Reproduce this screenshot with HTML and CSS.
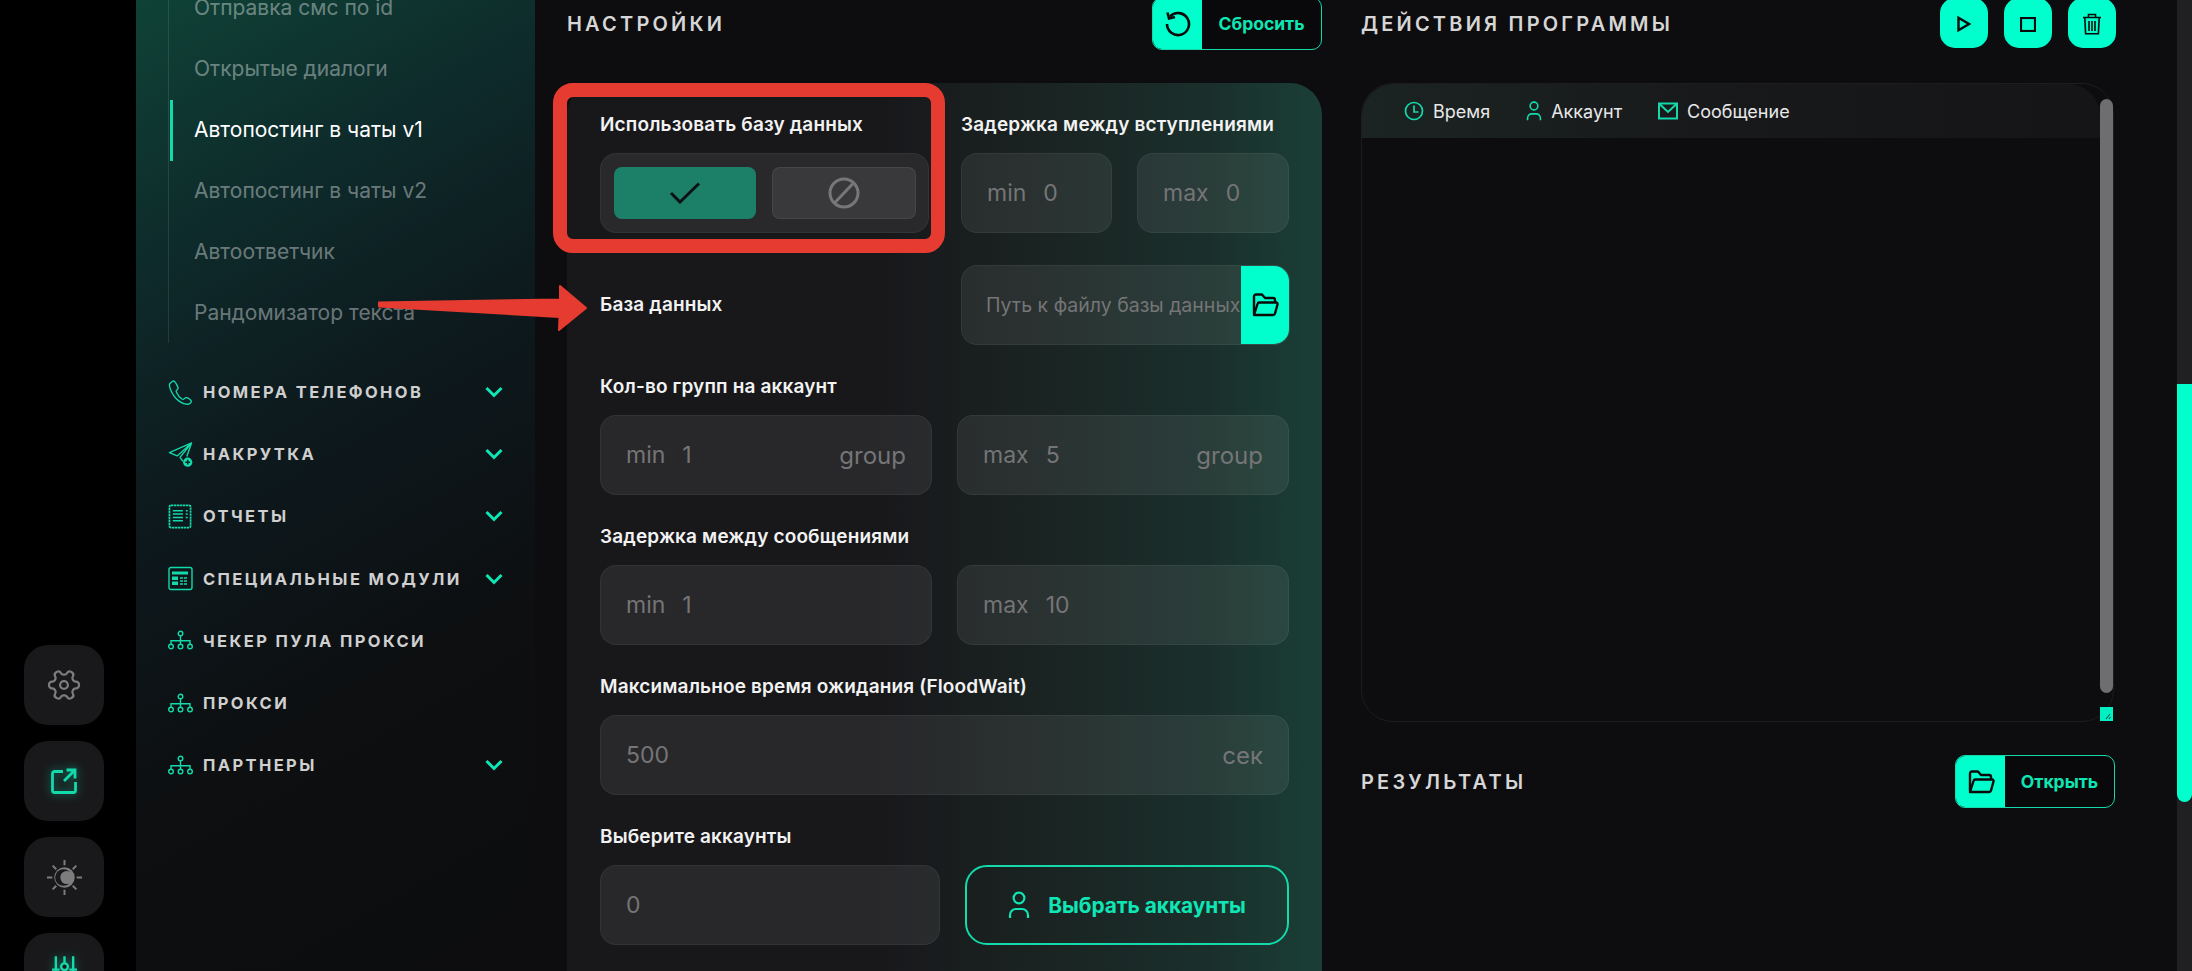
FILE: index.html
```html
<!DOCTYPE html>
<html lang="ru">
<head>
    <meta charset="UTF-8">
    <meta name="viewport" content="width=device-width, initial-scale=1.0">
    <title>Автопостинг в чаты v1</title>
    <link rel="stylesheet" href="styles.css">
</head>
<body>

<svg class="sprites" width="0" height="0">
    <symbol id="i-net" viewBox="0 0 25 20">
        <g fill="none" stroke="currentColor" stroke-width="1.4">
            <circle cx="12.5" cy="3" r="2.3"/>
            <path d="M12.5 5.3V10M3 13.5V10.2H22V13.5M12.5 10V13.5"/>
            <circle cx="3" cy="16" r="2.3"/>
            <circle cx="12.5" cy="16" r="2.3"/>
            <circle cx="22" cy="16" r="2.3"/>
        </g>
    </symbol>
    <symbol id="i-chev" viewBox="0 0 18 12">
        <path d="M1.5 2 9 9.5 16.5 2" fill="none" stroke="currentColor" stroke-width="3"/>
    </symbol>
    <symbol id="i-user" viewBox="0 0 22 28">
        <g fill="none" stroke="currentColor" stroke-width="2.2">
            <circle cx="11" cy="7" r="5.4"/>
            <path d="M2 27v-3a6 6 0 0 1 6-6h6a6 6 0 0 1 6 6v3"/>
        </g>
    </symbol>
    <symbol id="i-folder" viewBox="0 0 28 26">
        <g fill="none" stroke="currentColor" stroke-width="2.4" stroke-linejoin="round">
            <path d="M3 22V4.500A2 2 0 0 1 5 2.500h6l3 3.500h8a2 2 0 0 1 2 2V10"/>
            <path d="M3 23 6.500 12a2 2 0 0 1 2-1.500H25a1.500 1.500 0 0 1 1.500 2l-2.500 9a2 2 0 0 1-2 1.500z"/>
        </g>
    </symbol>
</svg>

<!-- Левая панель с кнопками -->
<aside class="rail">
    <div class="rail-btn">
        <svg class="rail-gear" viewBox="0 0 24 24"><g transform="rotate(90 12 12)"><path d="M12.22 2h-.44a2 2 0 0 0-2 2v.18a2 2 0 0 1-1 1.73l-.43.25a2 2 0 0 1-2 0l-.15-.08a2 2 0 0 0-2.73.73l-.22.38a2 2 0 0 0 .73 2.73l.15.1a2 2 0 0 1 1 1.72v.51a2 2 0 0 1-1 1.74l-.15.09a2 2 0 0 0-.73 2.73l.22.38a2 2 0 0 0 2.73.73l.15-.08a2 2 0 0 1 2 0l.43.25a2 2 0 0 1 1 1.73V20a2 2 0 0 0 2 2h.44a2 2 0 0 0 2-2v-.18a2 2 0 0 1 1-1.73l.43-.25a2 2 0 0 1 2 0l.15.08a2 2 0 0 0 2.73-.73l.22-.39a2 2 0 0 0-.73-2.73l-.15-.08a2 2 0 0 1-1-1.74v-.5a2 2 0 0 1 1-1.74l.15-.09a2 2 0 0 0 .73-2.73l-.22-.38a2 2 0 0 0-2.73-.73l-.15.08a2 2 0 0 1-2 0l-.43-.25a2 2 0 0 1-1-1.73V4a2 2 0 0 0-2-2z"/><circle cx="12" cy="12" r="2.6"/></g></svg>
    </div>
    <div class="rail-btn">
        <svg class="rail-share" viewBox="0 0 26 26"><path d="M12 3.500H3.500a2 2 0 0 0-2 2V22.500a2 2 0 0 0 2 2h19a2 2 0 0 0 2-2V14"/><path d="M13 13 23 3M15.500 2H24V10.500"/></svg>
    </div>
    <div class="rail-btn">
        <svg class="rail-sun" viewBox="0 0 36 36">
            <circle cx="18" cy="18" r="10.500" fill="currentColor"/>
            <circle cx="17" cy="18" r="8.600" fill="#19191b"/>
            <circle cx="20.500" cy="18" r="6.800" fill="currentColor"/>
            <path d="M18 0v5.500M18 30.500V36M0 18h5.500M30.500 18H36M5.800 5.800l3.700 3.700M26.500 26.500l3.700 3.700M5.800 30.200l3.700-3.700M26.500 9.500l3.700-3.700" stroke="currentColor" stroke-width="2" fill="none"/>
        </svg>
    </div>
    <div class="rail-btn">
        <svg class="rail-sliders" viewBox="0 0 26 36"><path d="M4 0V30M22 0V30M13 0V7M13 15V30M0 14H8M18 14H26"/><circle cx="13" cy="11" r="3.500"/></svg>
    </div>
</aside>

<!-- Меню -->
<nav class="sidebar">
    <ul class="submenu">
        <li>Отправка смс по id</li>
        <li>Открытые диалоги</li>
        <li class="active">Автопостинг в чаты v1</li>
        <li>Автопостинг в чаты v2</li>
        <li>Автоответчик</li>
        <li>Рандомизатор текста</li>
    </ul>
    <ul class="menu">
        <li>
            <svg class="menu-ico" viewBox="0 0 25 26"><path d="M4 1.500 1.500 3.500C.5 5 1 7 2 9.500c2 5 5 9.500 9 12.500 3 2.200 6 3.500 9 3.200 2.500-.3 4-1.800 3.700-3.300-.2-1-2.700-2.700-4.500-3.500-1.200-.4-2 .2-2.700 1-.6.700-1.500 1-2.500.4-2.500-1.600-4.500-4.300-5.800-7.300-.5-1 0-1.800.8-2.400.9-.7 1.200-1.500.8-2.700C9 5.500 7.500 2.800 6.500 1.700 5.800 1 4.800 1 4 1.500z" fill="none" stroke="currentColor" stroke-width="1.400"/></svg>
            <span>Номера телефонов</span>
            <svg class="chev"><use href="#i-chev"/></svg>
        </li>
        <li>
            <svg class="menu-ico" viewBox="0 0 25 26"><path d="M24 1 1 11l8 3.500L24 1 12 16l3 4M24 1 19 15" fill="none" stroke="currentColor" stroke-width="1.400" stroke-linejoin="round"/><circle cx="20" cy="21" r="4.800" fill="currentColor"/><path d="M20 18.500v5M17.500 21h5" stroke="#0e2426" stroke-width="1.500"/></svg>
            <span>Накрутка</span>
            <svg class="chev"><use href="#i-chev"/></svg>
        </li>
        <li>
            <svg class="menu-ico" viewBox="0 0 25 26"><rect x="1" y="1.500" width="22" height="23" rx="1.500" fill="none" stroke="currentColor" stroke-width="1.800" stroke-dasharray="2.500 .6"/><path d="M4.500 7H15M4.500 10.500H15M4.500 14H15M4.500 17.500H15M18 7h2M18 10.500h2M18 14h2" stroke="currentColor" stroke-width="1.600"/></svg>
            <span>Отчеты</span>
            <svg class="chev"><use href="#i-chev"/></svg>
        </li>
        <li>
            <svg class="menu-ico" viewBox="0 0 25 24"><rect x="1" y="1" width="23" height="22" rx="2" fill="none" stroke="currentColor" stroke-width="1.400"/><path d="M4 5h16v3H4z" fill="currentColor"/><path d="M4 10h6v3.500H4zM4 15h6v3.500H4z" fill="currentColor"/><path d="M12 11.500h8M12 14.500h8M12 17.500h8" stroke="currentColor" stroke-width="1.500" stroke-dasharray="3 1"/></svg>
            <span>Специальные модули</span>
            <svg class="chev"><use href="#i-chev"/></svg>
        </li>
        <li>
            <svg class="menu-ico"><use href="#i-net"/></svg>
            <span>Чекер пула прокси</span>
        </li>
        <li>
            <svg class="menu-ico"><use href="#i-net"/></svg>
            <span>Прокси</span>
        </li>
        <li>
            <svg class="menu-ico"><use href="#i-net"/></svg>
            <span>Партнеры</span>
            <svg class="chev"><use href="#i-chev"/></svg>
        </li>
    </ul>
</nav>

<main class="content">
    <!-- Настройки -->
    <section class="settings">
        <div class="head">
            <h2>Настройки</h2>
            <button class="act-btn">
                <span class="act-ico"><svg class="ico-reset" viewBox="0 0 28 26"><path d="M6 5.500A11 11 0 1 1 3 13" fill="none" stroke="currentColor" stroke-width="2.600"/><path d="M3.500 1.500 5 7.500 11 6" fill="none" stroke="currentColor" stroke-width="2.600"/></svg></span>
                <span class="act-text">Сбросить</span>
            </button>
        </div>

        <div class="panel">
            <div class="highlight"></div>

            <div class="row-2 row-top">
                <div>
                    <div class="label">Использовать базу данных</div>
                    <div class="toggle">
                        <div class="tg tg-on"><svg viewBox="0 0 32 22"><path d="M2 11 11 20 30 1.500" fill="none" stroke="currentColor" stroke-width="3"/></svg></div>
                        <div class="tg tg-off"><svg viewBox="0 0 32 32"><circle cx="16" cy="16" r="14" fill="none" stroke="currentColor" stroke-width="3"/><path d="M6.500 26 25.500 6" stroke="currentColor" stroke-width="3"/></svg></div>
                    </div>
                </div>
                <div>
                    <div class="label">Задержка между вступлениями</div>
                    <div class="pair pair-small">
                        <div class="field"><span class="pre">min</span><span>0</span></div>
                        <div class="field"><span class="pre">max</span><span>0</span></div>
                    </div>
                </div>
            </div>

            <div class="row-2 row-db">
                <div class="label">База данных</div>
                <div class="field field-path">
                    <span class="path-text">Путь к файлу базы данных</span>
                    <span class="path-btn"><svg><use href="#i-folder"/></svg></span>
                </div>
            </div>

            <div>
                <div class="label">Кол-во групп на аккаунт</div>
                <div class="pair">
                    <div class="field"><span class="pre">min</span><span>1</span><span class="unit">group</span></div>
                    <div class="field"><span class="pre">max</span><span>5</span><span class="unit">group</span></div>
                </div>
            </div>

            <div>
                <div class="label">Задержка между сообщениями</div>
                <div class="pair">
                    <div class="field"><span class="pre">min</span><span>1</span></div>
                    <div class="field"><span class="pre">max</span><span>10</span></div>
                </div>
            </div>

            <div>
                <div class="label">Максимальное время ожидания (FloodWait)</div>
                <div class="field"><span>500</span><span class="unit">сек</span></div>
            </div>

            <div>
                <div class="label">Выберите аккаунты</div>
                <div class="pair pair-accounts">
                    <div class="field"><span>0</span></div>
                    <button class="pick-btn"><svg><use href="#i-user"/></svg>Выбрать аккаунты</button>
                </div>
            </div>
        </div>
    </section>

    <!-- Действия программы -->
    <section class="actions">
        <div class="head head-actions">
            <h2>Действия программы</h2>
            <div class="tool-btns">
                <div class="tool"><svg class="ico-play" viewBox="0 0 14 16"><path d="M1.500 1.800 12 8 1.500 14.200z" fill="none" stroke="currentColor" stroke-width="2.400"/></svg></div>
                <div class="tool"><svg class="ico-stop" viewBox="0 0 16 15"><rect x="1" y="1" width="14" height="13" fill="none" stroke="currentColor" stroke-width="2.200"/></svg></div>
                <div class="tool"><svg class="ico-trash" viewBox="0 0 20 22"><path d="M1 4.500H19M6.500 4.500V1.500H13.500V4.500M2.800 4.500 3.600 20.800H16.400L17.200 4.500M7 8V18M10 8V18M13 8V18" fill="none" stroke="currentColor" stroke-width="1.600"/></svg></div>
            </div>
        </div>

        <div class="log">
            <div class="log-head">
                <span class="log-col"><svg viewBox="0 0 20 20"><circle cx="10" cy="10" r="8.500" fill="none" stroke="currentColor" stroke-width="1.700"/><path d="M10 4.500V11H14.500" fill="none" stroke="currentColor" stroke-width="1.700"/></svg>Время</span>
                <span class="log-col"><svg class="log-user"><use href="#i-user"/></svg>Аккаунт</span>
                <span class="log-col"><svg viewBox="0 0 20 20"><rect x="1" y="2.500" width="18" height="15" fill="none" stroke="currentColor" stroke-width="2"/><path d="M1.500 3 10 11 18.500 3" fill="none" stroke="currentColor" stroke-width="2"/></svg>Сообщение</span>
            </div>
            <div class="log-thumb"></div>
            <div class="log-corner"><svg viewBox="0 0 13 14"><path d="M6 12 10 7M9 12 10.500 10" stroke="#0a3a30" stroke-width="1" fill="none"/></svg></div>
        </div>

        <div class="head head-results">
            <h2>Результаты</h2>
            <button class="act-btn">
                <span class="act-ico"><svg><use href="#i-folder"/></svg></span>
                <span class="act-text">Открыть</span>
            </button>
        </div>
    </section>
</main>

<div class="page-scroll"><div class="page-thumb"></div></div>

<!-- Стрелка поверх скриншота -->
<svg class="arrow" viewBox="0 0 210 48"><path d="M1 18.500 182 15.500 182 2 208 24 181 46 181.500 33 1 22.500z" fill="#e63b30" stroke="#e63b30" stroke-width="2" stroke-linejoin="round"/></svg>

</body>
</html>
```

FILE: styles.css
```css
* {
    box-sizing: border-box;
}
html, body {
    height: 971px;
    overflow: hidden;
}
body {
    margin: 0;
    display: grid;
    grid-template-columns: 136px 399px 1fr 15px;
    background-color: #0d0d0f;
    color: #fff;
    font-family: Inter, "Noto Sans", sans-serif;
    position: relative;
}
.sprites {
    position: absolute;
}
button {
    font-family: inherit;
    cursor: pointer;
    padding: 0;
    background: none;
}

/* левая панель */
.rail {
    background-color: #000;
    padding: 645px 0 0 24px;
    display: flex;
    flex-direction: column;
    gap: 16px;
    height: 971px;
    overflow: hidden;
}
.rail-btn {
    flex: none;
    width: 80px;
    height: 80px;
    border-radius: 24px;
    background-color: #19191b;
    display: flex;
    align-items: center;
    justify-content: center;
}
.rail-gear {
    width: 36px;
    height: 36px;
    fill: none;
    stroke: #7d7d7d;
    stroke-width: 1.5;
}
.rail-share {
    width: 26px;
    height: 26px;
    fill: none;
    stroke: #13d9ab;
    stroke-width: 2.8;
    filter: drop-shadow(0 0 5px rgba(0, 255, 204, .5));
}
.rail-sun {
    width: 35px;
    height: 35px;
    color: #7d7d7d;
}
.rail-sliders {
    width: 25px;
    height: 35px;
    fill: #19191b;
    stroke: #13d9ab;
    stroke-width: 2.5;
    filter: drop-shadow(0 0 4px rgba(0, 255, 204, .4));
}

/* меню */
.sidebar {
    height: 971px;
    overflow: hidden;
    background: linear-gradient(150deg, #0f4236 0%, #0e2b2b 22%, #0d1a1e 42%, #0d0f11 68%, #0d0d0f 100%);
}
.submenu {
    list-style: none;
    margin: -23px 0 0 32px;
    padding: 0;
    border-left: 1px solid rgba(255, 255, 255, .1);
}
.submenu li {
    height: 61px;
    line-height: 61px;
    padding-left: 25px;
    font-size: 21px;
    color: rgba(255, 255, 255, .4);
    position: relative;
}
.submenu li.active {
    color: #fff;
}
.submenu li.active::before {
    content: "";
    position: absolute;
    left: 1px;
    top: 1px;
    width: 3px;
    height: 61px;
    background-color: #13d9ab;
}
.menu {
    list-style: none;
    margin: 18px 0 0 32px;
    padding: 0;
}
.menu li {
    height: 62.2px;
    display: flex;
    align-items: center;
    position: relative;
    color: #cfcfcf;
}
.menu span {
    margin-left: 10px;
    font-size: 16.5px;
    font-weight: 700;
    letter-spacing: 2.4px;
    text-transform: uppercase;
}
.menu-ico {
    width: 25px;
    height: 25px;
    flex: none;
    color: #13d9ab;
}
.chev {
    position: absolute;
    left: 317px;
    top: 25px;
    width: 18px;
    height: 12px;
    color: #0ee6b5;
}

/* контент */
.content {
    display: grid;
    grid-template-columns: 755px 753px;
    column-gap: 39px;
    padding-left: 32px;
    margin-top: -3px;
    height: 974px;
    overflow: hidden;
}
.head {
    height: 53px;
    margin-bottom: 33px;
    display: flex;
    align-items: center;
    justify-content: space-between;
}
h2 {
    margin: 0;
    font-size: 20px;
    font-weight: 600;
    letter-spacing: 3.2px;
    text-transform: uppercase;
    color: #d6d6d6;
}
.act-btn {
    display: flex;
    height: 53px;
    border: 1px solid #13d9ab;
    border-radius: 10px;
    background-color: #09090b;
    overflow: hidden;
    align-items: stretch;
}
.act-ico {
    width: 49px;
    background-color: #00ffcc;
    color: #0a0a0a;
    display: flex;
    align-items: center;
    justify-content: center;
}
.act-ico svg {
    width: 28px;
    height: 26px;
}
.act-text {
    width: 119px;
    align-self: center;
    text-align: center;
    font-size: 17.5px;
    font-weight: 700;
    color: #0ee6b5;
}

/* панель настроек */
.panel {
    position: relative;
    height: 900px;
    padding: 31px 33px 0;
    border-radius: 32px 32px 0 0;
    background: linear-gradient(90deg, #18181b 0%, #18181b 42%, #1a2322 62%, #1a2f2b 85%, #1a3f36 100%);
    display: flex;
    flex-direction: column;
    gap: 31px;
}
.highlight {
    position: absolute;
    left: -14px;
    top: 0;
    width: 392px;
    height: 170px;
    border: 14px solid #e63b30;
    border-radius: 20px;
    pointer-events: none;
    z-index: 2;
}
.label {
    height: 22px;
    line-height: 22px;
    margin-bottom: 17px;
    font-size: 19px;
    font-weight: 600;
    letter-spacing: .15px;
    color: #f2f2f2;
    white-space: nowrap;
}
.row-2 {
    display: grid;
    grid-template-columns: 329px 329px;
    column-gap: 32px;
}
.row-top {
    margin-bottom: 1px;
}
.row-db {
    align-items: center;
}
.row-db .label {
    margin-bottom: 0;
}
.field {
    height: 80px;
    border-radius: 16px;
    background-color: rgba(255, 255, 255, .07);
    border: 1px solid rgba(255, 255, 255, .05);
    display: flex;
    align-items: center;
    padding: 0 25px;
    font-size: 23px;
    color: #757577;
}
.pre {
    margin-right: 17px;
}
.unit {
    margin-left: auto;
    font-size: 24px;
}
.pair {
    display: grid;
    grid-template-columns: 1fr 1fr;
    column-gap: 25px;
}
.pair-accounts {
    grid-template-columns: 340px 1fr;
}
.toggle {
    height: 80px;
    border-radius: 16px;
    background-color: #29292c;
    border: 1px solid rgba(255, 255, 255, .05);
    display: grid;
    grid-template-columns: 142px 144px;
    column-gap: 16px;
    padding: 13px;
    position: relative;
    z-index: 3;
}
.tg {
    border-radius: 8px;
    display: flex;
    align-items: center;
    justify-content: center;
}
.tg-on {
    background-color: #1c8069;
    color: #0e1216;
}
.tg-on svg {
    width: 32px;
    height: 22px;
}
.tg-off {
    background-color: #39393b;
    border: 1px solid rgba(255, 255, 255, .07);
    color: #777;
}
.tg-off svg {
    width: 32px;
    height: 32px;
}
.pair-small {
    grid-template-columns: 151px 152px;
    column-gap: 25px;
}
.field-path {
    padding: 0 0 0 24px;
    overflow: hidden;
    justify-content: space-between;
}
.path-text {
    font-size: 19.5px;
    white-space: nowrap;
    overflow: hidden;
}
.path-btn {
    flex: none;
    width: 48px;
    height: 80px;
    background-color: #00ffcc;
    color: #0a0a0a;
    display: flex;
    align-items: center;
    justify-content: center;
}
.path-btn svg {
    width: 28px;
    height: 26px;
}
.pick-btn {
    height: 80px;
    border: 2px solid #13d9ab;
    border-radius: 22px;
    color: #0ee6b5;
    font-size: 20.8px;
    font-weight: 700;
    display: flex;
    align-items: center;
    justify-content: center;
    gap: 18px;
}
.pick-btn svg {
    width: 22px;
    height: 28px;
}

/* действия */
.tool-btns {
    display: flex;
    gap: 16px;
    margin: -1px -2px 0 0;
}
.tool {
    width: 48px;
    height: 50px;
    padding-top: 2px;
    background-color: #00ffcc;
    border-radius: 15px;
    color: #0a0a0a;
    display: flex;
    align-items: center;
    justify-content: center;
}
.ico-play {
    width: 14px;
    height: 16px;
}
.ico-stop {
    width: 16px;
    height: 15px;
}
.ico-trash {
    width: 20px;
    height: 22px;
}
.log {
    position: relative;
    height: 639px;
    border-radius: 32px;
    border: 1px solid #1d1d20;
    background-color: #0d0d0f;
}
.log-head {
    height: 54px;
    margin-right: 13px;
    border-radius: 32px 32px 0 0;
    background: linear-gradient(90deg, #1b2422 0%, #18191b 45%, #151517 100%);
    display: flex;
    align-items: center;
    padding-left: 42px;
    gap: 36px;
}
.log-col {
    display: flex;
    align-items: center;
    gap: 9px;
    font-size: 18px;
    color: #e8e8e8;
}
.log-col svg {
    width: 20px;
    height: 20px;
    color: #13d9ab;
}
.log-col .log-user {
    width: 16px;
}
.log-thumb {
    position: absolute;
    right: 0;
    top: 15px;
    width: 13px;
    height: 594px;
    border-radius: 7px;
    background-color: #6e6e70;
}
.log-corner {
    position: absolute;
    right: 0;
    bottom: 0;
    width: 13px;
    height: 14px;
    background-color: #00f0c4;
    display: flex;
}
.head-results {
    margin: 33px -1px 0 0;
    height: 53px;
}
.head-results .act-text {
    width: 109px;
}

/* скролл страницы */
.page-scroll {
    background-color: #202022;
}
.page-thumb {
    height: 418px;
    margin-top: 384px;
    background-color: #00ffcc;
    border-radius: 0 0 8px 8px;
}

/* стрелка */
.arrow {
    position: absolute;
    left: 378px;
    top: 284px;
    width: 210px;
    height: 48px;
    z-index: 4;
}
```
